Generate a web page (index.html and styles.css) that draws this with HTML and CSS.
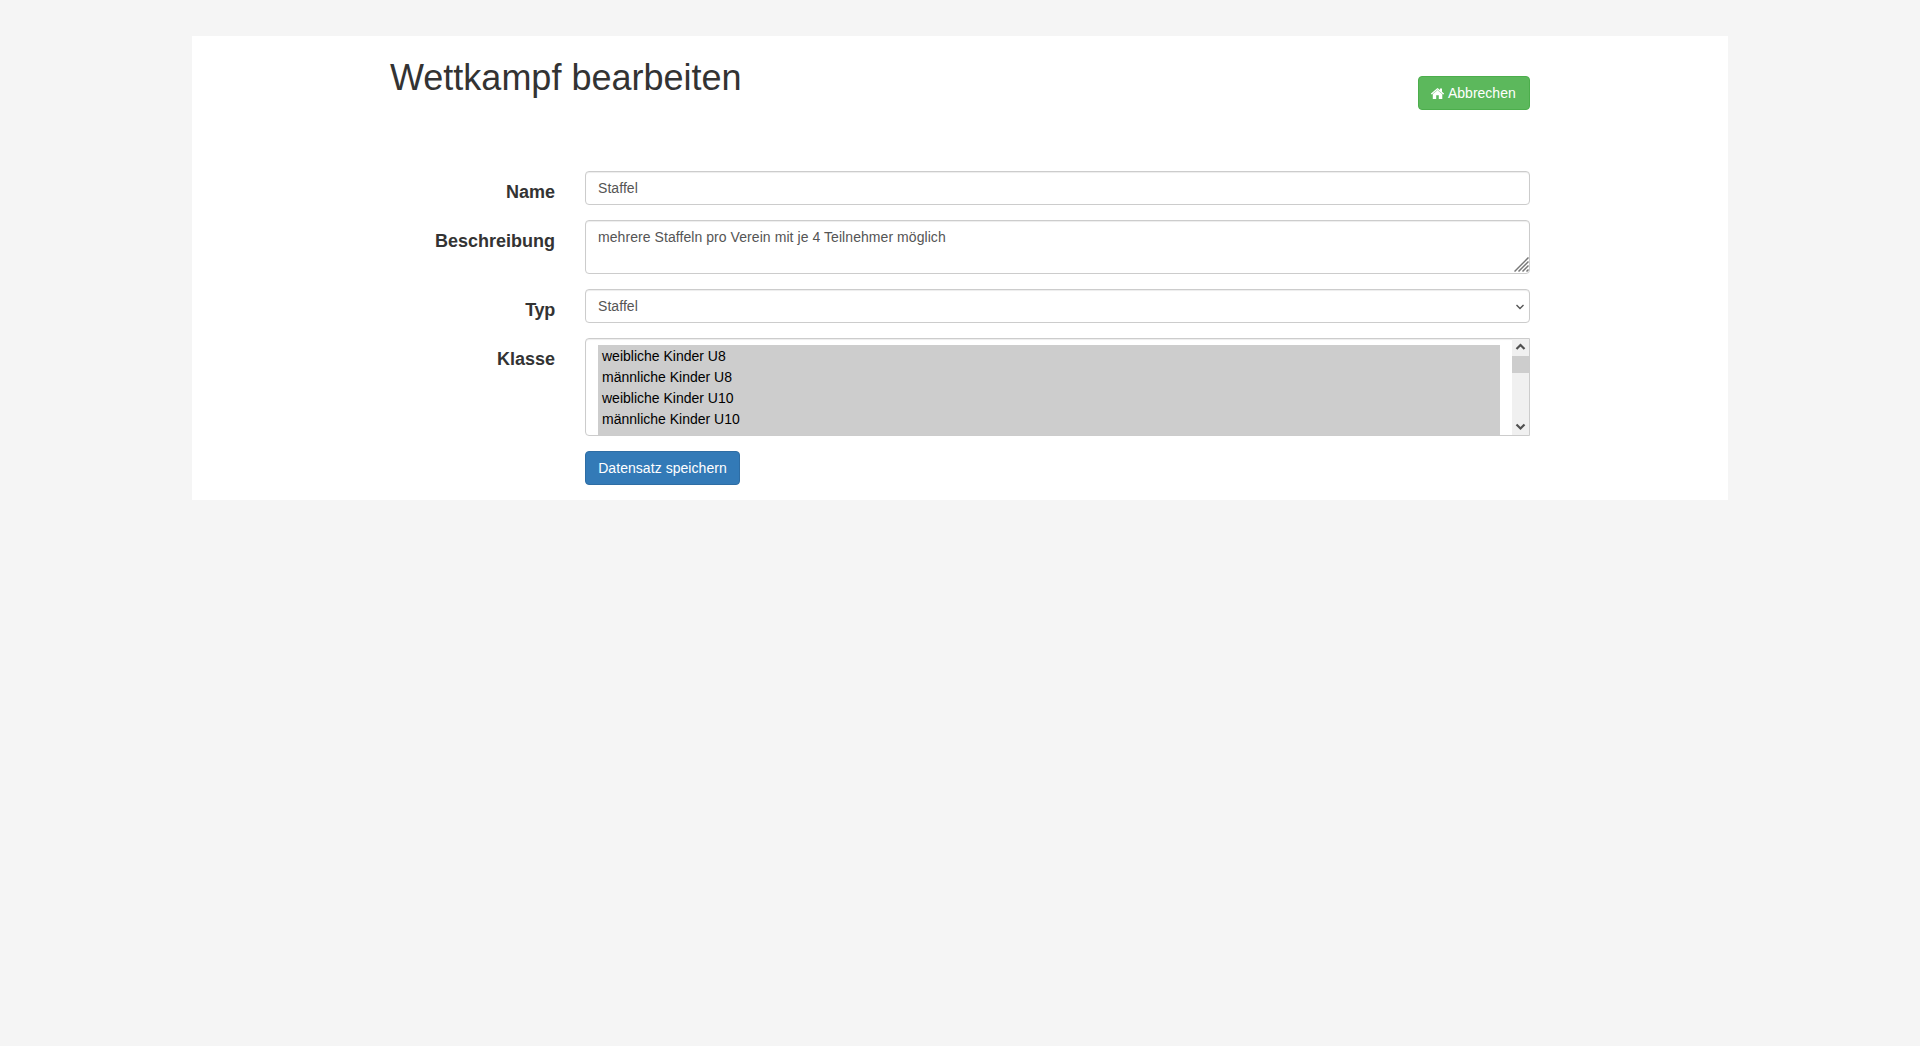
FILE: index.html
```html
<!DOCTYPE html>
<html lang="de">
<head>
<meta charset="utf-8">
<title>Wettkampf bearbeiten</title>
<link rel="stylesheet" href="styles.css">
</head>
<body>
<main class="page">
  <div class="container">
    <header class="page-header">
      <h1>Wettkampf bearbeiten</h1>
      <button class="btn btn-success" type="button"><svg class="icon-home" viewBox="0 0 13 11" width="13" height="11"><path fill="#fff" d="M6.5 0 9 2V.5h2v3.2L13 5.6v.6h-1.7V11H7.8V7.3H5.2V11H1.8V6.2H0v-.6z"/><path d="M1.2 6.4 6.5 1.9l5.3 4.5" fill="none" stroke="#5cb85c" stroke-width=".5"/></svg>Abbrechen</button>
    </header>
    <form class="form">
      <label for="name">Name</label>
      <input class="control" id="name" type="text" value="Staffel">
      <label for="description">Beschreibung</label>
      <div class="field">
        <textarea class="control" id="description" spellcheck="false">mehrere Staffeln pro Verein mit je 4 Teilnehmer möglich</textarea>
        <svg class="grip" viewBox="0 0 15 15" width="15" height="15"><path d="M.5 14.5l14-14M4.5 14.5l10-10M8.5 14.5l6-6M12.5 14.5l2-2" fill="none" stroke="#777" stroke-width="1.5"/></svg>
      </div>
      <label class="label-type" for="type">Typ</label>
      <div class="field">
        <select class="control" id="type"><option>Staffel</option></select>
        <svg class="chevron" viewBox="0 0 8 6" width="8" height="6"><path d="M.5 1 4 4.5 7.5 1" fill="none" stroke="#555" stroke-width="1.4"/></svg>
      </div>
      <span class="label">Klasse</span>
      <div class="listbox">
        <ul class="options">
          <li>weibliche Kinder U8</li>
          <li>männliche Kinder U8</li>
          <li>weibliche Kinder U10</li>
          <li>männliche Kinder U10</li>
          <li></li>
        </ul>
        <div class="scrollbar">
          <svg viewBox="0 0 17 17" width="17" height="17"><path d="M4.5 10 8.5 6l4 4" fill="none" stroke="#505050" stroke-width="2.2"/></svg>
          <div class="thumb"></div>
          <svg viewBox="0 0 17 17" width="17" height="17"><path d="M4.5 6.5l4 4 4-4" fill="none" stroke="#505050" stroke-width="2.2"/></svg>
        </div>
      </div>
      <button class="btn btn-primary" type="button">Datensatz speichern</button>
    </form>
  </div>
</main>
</body>
</html>
```
FILE: styles.css
```css
* { box-sizing: border-box; }
body {
  margin: 0;
  padding-top: 36px;
  background: #f5f5f5;
  color: #333;
  font: 14px/20px "Liberation Sans", Arial, sans-serif;
}
.page { width: 80%; height: 464px; margin: 0 auto; background: #fff; }
.container { width: 1140px; margin: 0 auto; padding-top: 21px; }
.page-header { display: flex; justify-content: space-between; align-items: flex-start; height: 114px; }
h1 { margin: 0; font-size: 36px; font-weight: 400; line-height: 42px; }
.btn {
  height: 34px;
  padding: 6px 12px;
  border: 1px solid;
  border-radius: 4px;
  color: #fff;
  font: inherit;
  white-space: nowrap;
}
.btn-success { width: 112px; margin-top: 19px; background: #5cb85c; border-color: #4cae4c; text-align: left; }
.btn-primary { grid-column: 2; justify-self: start; width: 155px; background: #337ab7; border-color: #2e6da4; letter-spacing: .05px; }
.icon-home { margin-right: 4px; vertical-align: -1px; }
.form { display: grid; grid-template-columns: 165px 945px; column-gap: 30px; row-gap: 15px; }
label, .label { padding-top: 8px; text-align: right; font-size: 18px; font-weight: 700; line-height: 26px; }
.label-type { letter-spacing: -.3px; }
.control {
  display: block;
  width: 100%;
  height: 34px;
  margin: 0;
  padding: 6px 12px;
  border: 1px solid #ccc;
  border-radius: 4px;
  background: #fff;
  box-shadow: inset 0 1px 1px rgba(0, 0, 0, .075);
  color: #555;
  font: inherit;
  letter-spacing: .065px;
  font-variant-ligatures: none;
  appearance: none;
}
textarea.control { height: 54px; resize: none; overflow: hidden; }
.field { position: relative; }
.grip { position: absolute; right: 1px; bottom: 2px; }
.chevron { position: absolute; right: 6px; top: 15px; }
.listbox {
  display: flex;
  height: 98px;
  padding-left: 12px;
  border: 1px solid #ccc;
  border-radius: 4px 0 0 4px;
  box-shadow: inset 0 1px 1px rgba(0, 0, 0, .075);
  overflow: hidden;
}
.options { flex: 1; margin: 6px 12px 0 0; padding: 0; list-style: none; background: #cdcdcd; color: #000; }
.options li { height: 21px; padding: 1px 4px 0; }
.scrollbar { display: flex; flex-direction: column; width: 17px; background: #f0f0f0; }
.scrollbar svg { flex: none; }
.thumb { height: 17px; margin-bottom: auto; background: #cdcdcd; }
```
